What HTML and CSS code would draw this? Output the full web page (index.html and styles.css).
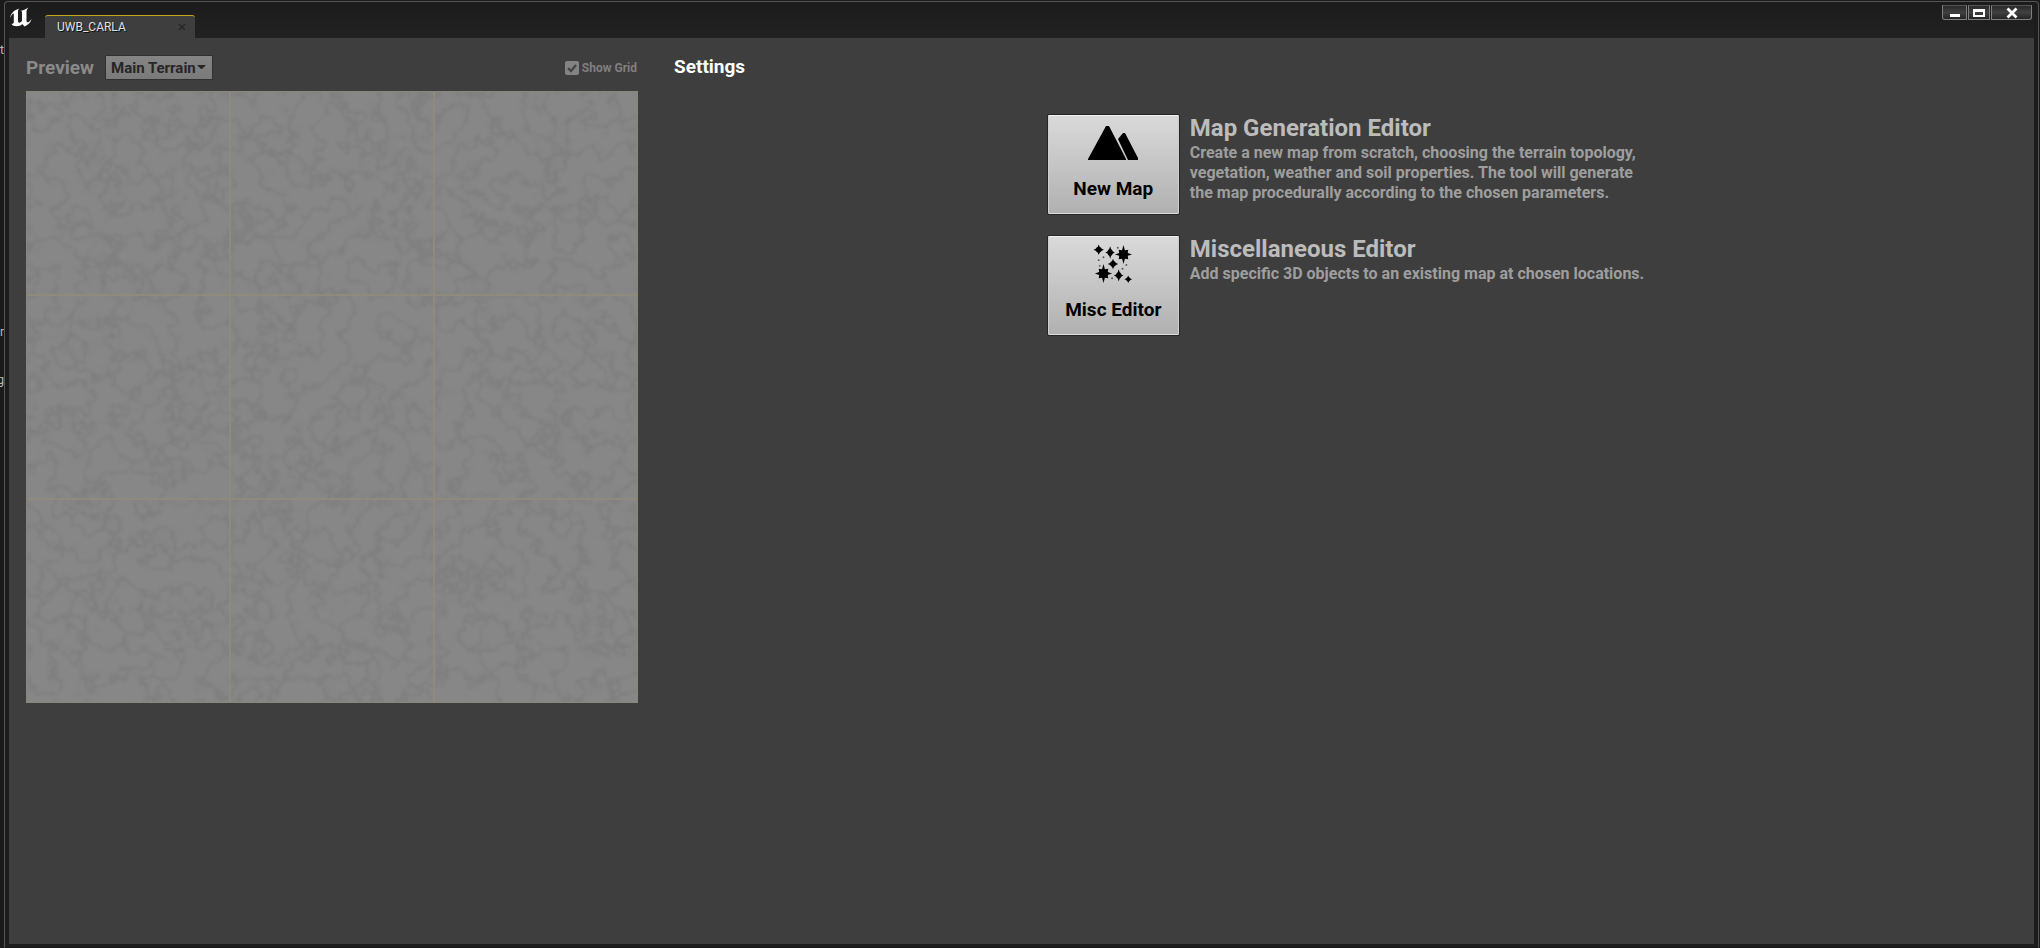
FILE: index.html
```html
<!DOCTYPE html>
<html lang="en">
<head>
<meta charset="utf-8">
<title>UWB_CARLA</title>
<link rel="stylesheet" href="styles.css">
</head>
<body>
<div class="behind" aria-hidden="true">
  <span class="behind-text behind-rt">rt</span>
  <span class="behind-text behind-r">r</span>
  <span class="behind-text behind-g">g</span>
</div>
<div class="window">
  <header class="titlebar">
    <svg class="logo" viewBox="0 0 24 22" role="img" aria-label="Unreal Engine">
      <path fill="#fff" d="M1 11C2 6 5 3 10.500 1.500C9.500 2.300 9 3 9 4V14C9 15.500 10 16 11 15.500C12 15 12.500 14.500 13 14V5.500C13 4.500 12.500 4 11.500 3.800C14 3.500 16.500 2.500 19.500 .5C18 2.200 17.500 3.200 17.500 5V13.500C17.500 15 18 15.500 19 15.300C20.500 15 21.500 13.500 22.500 12C22 15 19.500 18 15.500 19.500L13.300 17C12 18.300 10 19.300 7.500 19.300C4.500 19.300 2.800 18 2.500 16.700C3.800 17.200 4.800 16.500 4.800 15V7.500C4.800 6.200 4 6.300 3 7.500C2.200 8.500 1.500 9.800 1 11Z"/>
    </svg>
    <div class="tab">
      <span>UWB_CARLA</span>
      <button class="tab-close" aria-label="Close tab"><svg viewBox="0 0 8 8"><path d="M1 1L7 7M7 1L1 7" stroke="#242424" stroke-width="1.200"/></svg></button>
    </div>
    <div class="controls">
      <button class="control" aria-label="Minimize"><svg viewBox="0 0 16 12"><path d="M3 7H13V10H3Z" fill="#fff"/></svg></button>
      <button class="control" aria-label="Maximize"><svg viewBox="0 0 16 12"><path fill-rule="evenodd" d="M2 2H14V10H2ZM4 5V8H12V5Z" fill="#fff"/></svg></button>
      <button class="control control-close" aria-label="Close"><svg viewBox="0 0 16 12"><path d="M3.500 1.500L12.500 10.500M12.500 1.500L3.500 10.500" stroke="#fff" stroke-width="2.800"/></svg></button>
    </div>
  </header>
  <main class="content">
    <section class="preview">
      <div class="preview-bar">
        <label class="preview-title" for="layer">Preview</label>
        <div class="combo">
          <select id="layer"><option>Main Terrain</option></select>
          <svg viewBox="0 0 9 5"><path d="M0 0H9L5 4H4Z" fill="#262626"/></svg>
        </div>
        <label class="check">
          <span class="box">
            <input type="checkbox" checked>
            <svg viewBox="0 0 14 14"><path d="M3 7L6 10L11 4" fill="none" stroke="#444" stroke-width="2.400"/></svg>
          </span>
          Show Grid
        </label>
      </div>
      <svg class="terrain" viewBox="0 0 612 612" role="img" aria-label="Terrain preview">
        <filter id="veins" x="0" y="0" width="100%" height="100%" color-interpolation-filters="sRGB">
          <feTurbulence type="fractalNoise" baseFrequency="0.034" numOctaves="4" seed="7"/>
          <feColorMatrix values="0 0 0 0 .4  0 0 0 0 .4  0 0 0 0 .4  1 0 0 0 0"/>
          <feComponentTransfer>
            <feFuncA type="table" tableValues="0 0 0 0 0 0 0 0 0 .03 .25 .03 0 0 0 0 0 0 0 0 0"/>
          </feComponentTransfer>
          <feGaussianBlur stdDeviation="1.200"/>
        </filter>
        <rect width="612" height="612" fill="#878787"/>
        <rect width="612" height="612" filter="url(#veins)"/>
        <g fill="none" stroke="#8f8b7c">
          <path d="M0 204H612M0 408H612M204 0V612M408 0V612" stroke-width="2"/>
          <rect x=".5" y=".5" width="611" height="611" stroke="#8a8979"/>
        </g>
      </svg>
    </section>
    <section class="settings">
      <h2 class="settings-title">Settings</h2>
      <div class="tools">
        <article class="tool">
          <button class="tool-button">
            <svg viewBox="0 0 50 40"><path d="M0 37L18 4H21L38 37V38H0ZM30 17L35 11H37L50 36V38H40Z" fill="#000"/></svg>
            New Map
          </button>
          <div class="tool-text">
            <h3>Map Generation Editor</h3>
            <p>Create a new map from scratch, choosing the terrain topology,<br>vegetation, weather and soil properties. The tool will generate<br>the map procedurally according to the chosen parameters.</p>
          </div>
        </article>
        <article class="tool">
          <button class="tool-button">
            <svg viewBox="0 0 50 42">
              <defs>
                <path id="star4" d="M0 -10Q1.500 -4.500 4 -4Q4.500 -1.500 10 0Q4.500 1.500 4 4Q1.500 4.500 0 10Q-1.500 4.500 -4 4Q-4.500 1.500 -10 0Q-4.500 -1.500 -4 -4Q-1.500 -4.500 0 -10Z"/>
                <path id="star8" d="M0 -10L1.500 -4.500L5 -5L4.500 -1.500L9 0L4.500 1.500L5 5L1.500 4.500L0 10L-1.500 4.500L-5 5L-4.500 1.500L-9 0L-4.500 -1.500L-5 -5L-1.500 -4.500Z"/>
              </defs>
              <use href="#star4" transform="translate(10 7) scale(.55)"/>
              <use href="#star4" transform="translate(22 10) scale(.5 .65)"/>
              <use href="#star8" transform="translate(36 12)"/>
              <use href="#star4" transform="translate(25 22) scale(.55)"/>
              <use href="#star8" transform="translate(15 32)"/>
              <use href="#star4" transform="translate(31 34) scale(.5 .65)"/>
              <use href="#star4" transform="translate(41 38) scale(.4)"/>
              <g fill="#555"><circle cx="30" cy="5" r="1"/><circle cx="10" cy="18" r="1"/><circle cx="15" cy="15" r="1"/><circle cx="39" cy="23" r="1"/><circle cx="35" cy="27" r="1"/><circle cx="11" cy="24" r="1"/><circle cx="24" cy="37" r="1"/></g>
            </svg>
            Misc Editor
          </button>
          <div class="tool-text">
            <h3>Miscellaneous Editor</h3>
            <p>Add specific 3D objects to an existing map at chosen locations.</p>
          </div>
        </article>
      </div>
    </section>
  </main>
</div>
</body>
</html>
```
FILE: styles.css
```css
* { box-sizing: border-box; }
html, body { height: 100%; }
body {
  margin: 0;
  padding: 1px 1px 0 4px;
  background: #1a1a1a;
  color: #9e9e9e;
  font-family: Roboto, "Liberation Sans", sans-serif;
  overflow: hidden;
}
h2, h3, p { margin: 0; }
svg { display: block; }
button, select, input { font: inherit; margin: 0; }

.behind {
  position: absolute;
  inset: 0 auto 0 0;
  width: 4px;
  overflow: hidden;
  color: #bbb;
  font-size: 12px;
  line-height: 16px;
}
.behind-text { position: absolute; right: 0; }
.behind-rt { top: 42px; }
.behind-r { top: 324px; }
.behind-g { top: 372px; }

.window {
  display: flex;
  flex-direction: column;
  height: 100%;
  padding: 0 4px 3px;
  border: 1px solid #555;
  border-bottom-color: #151515;
  border-radius: 4px 4px 0 0;
  background: #1c1c1c;
}
.titlebar {
  display: flex;
  align-items: flex-start;
  height: 36px;
  flex: none;
  background: linear-gradient(#1b1b1b, #222);
}
.logo { width: 24px; height: 22px; margin-top: 5px; }
.tab {
  display: flex;
  align-items: center;
  justify-content: space-between;
  align-self: flex-end;
  width: 150px;
  height: 23px;
  margin-left: 12px;
  padding: 0 9px 0 12px;
  border-top: 1px solid #c4a71e;
  border-radius: 3px 3px 0 0;
  background: #3e3e3e;
  color: #e0e0e0;
  font-size: 12px;
  text-shadow: 1px 1px 0 #111;
}
.tab-close { width: 8px; height: 8px; padding: 0; border: 0; background: none; }
.controls { display: flex; gap: 1px; margin: 3px 2px 0 auto; }
.control {
  display: grid;
  place-items: center;
  width: 25px;
  height: 15px;
  padding: 0;
  border: 1px solid #808080;
  border-top-color: #555;
  background: linear-gradient(#2a2a2a, #404040 50%, #242424);
}
.control:nth-child(2) { width: 22px; }
.control svg { width: 16px; height: 12px; }
.control-close { width: 41px; border-radius: 0 0 3px 0; }
.control:first-child { border-radius: 0 0 0 3px; }

.content {
  display: flex;
  flex: 1;
  gap: 36px;
  padding: 16px 17px;
  background: #3e3e3e;
}
.preview { flex: 0 0 612px; }
.preview-bar { display: flex; align-items: center; height: 27px; margin-bottom: 10px; }
.preview-title { font-size: 19px; font-weight: 700; color: #8a8a8a; }
.combo { display: grid; align-items: center; margin-left: 11px; }
.combo > * { grid-area: 1 / 1; }
.combo select {
  appearance: none;
  height: 25px;
  padding: 0 15px 0 5px;
  border: 1px solid #303030;
  border-radius: 1px;
  background: linear-gradient(#858585, #7a7a7a);
  color: #262626;
  font-size: 15px;
  font-weight: 700;
}
.combo svg { width: 9px; height: 5px; justify-self: end; margin-right: 7px; }
.check {
  display: flex;
  align-items: center;
  gap: 3px;
  margin: 0 1px 0 auto;
  font-size: 12px;
  font-weight: 700;
  color: #808080;
}
.box { display: grid; width: 14px; height: 14px; }
.box > * { grid-area: 1 / 1; width: 14px; height: 14px; }
.box input { appearance: none; border-radius: 2px; background: #838383; }
.box svg { pointer-events: none; }
.terrain { width: 100%; height: auto; }

.settings { flex: 1; display: flex; flex-direction: column; }
.settings-title { font-size: 19px; line-height: 26px; color: #fff; }
.tools { display: grid; gap: 20px; margin: 34px auto 0; }
.tool { display: flex; gap: 10px; }
.tool-button {
  display: flex;
  flex-direction: column;
  align-items: center;
  gap: 15px;
  width: 133px;
  height: 101px;
  padding: 7px 0 0;
  border: 1px solid #262626;
  border-radius: 2px;
  background: linear-gradient(#dadada, #b0b0b0);
  box-shadow: inset 0 1px #f2f2f2, inset 0 -1px #ddd, inset 1px 0 #cfcfcf, inset -1px 0 #cfcfcf;
  color: #000;
  font-size: 19px;
  font-weight: 700;
}
.tool-button svg { width: 50px; height: 40px; flex: none; }
.tool-text h3 { font-size: 24px; line-height: 29px; color: #bcbcbc; }
.tool-text p { font-size: 16px; font-weight: 700; line-height: 20px; }
```
